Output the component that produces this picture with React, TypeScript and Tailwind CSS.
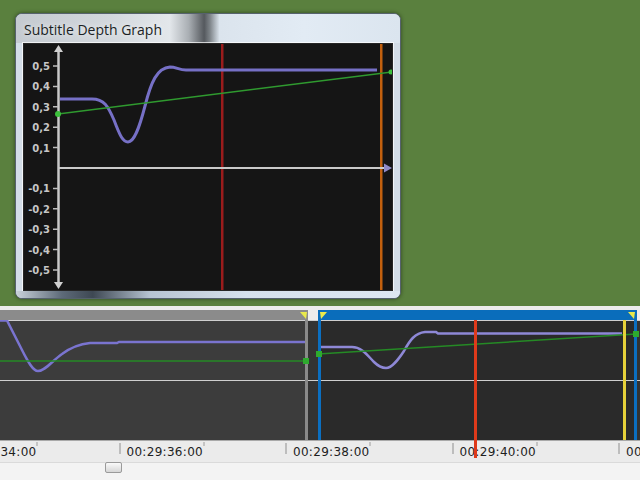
import React from "react";

// y positions of the depth labels in the graph (svg coords)
const depthLabels = [
  { t: "0,5", y: 22 },
  { t: "0,4", y: 42.4 },
  { t: "0,3", y: 62.8 },
  { t: "0,2", y: 83.2 },
  { t: "0,1", y: 103.6 },
  { t: "-0,1", y: 144.4 },
  { t: "-0,2", y: 164.8 },
  { t: "-0,3", y: 185.2 },
  { t: "-0,4", y: 205.6 },
  { t: "-0,5", y: 226 },
];

const rulerLabels = ["00:29:34:00", "00:29:36:00", "00:29:38:00", "00:29:40:00", "00:29:42:00"];

function DepthGraph() {
  return (
    <svg width="368" height="246" viewBox="0 0 368 246" className="block">
      {/* markers */}
      <rect x="197" y="0" width="2.5" height="246" fill="#9a1c1c" />
      <rect x="356" y="0" width="2.5" height="246" fill="#c2600e" />

      {/* y axis */}
      <line x1="34.5" y1="6" x2="34.5" y2="240" stroke="#c9c9c9" strokeWidth="2.5" />
      <polygon points="34.5,1 30,8 39,8" fill="#d0d0d0" />
      <polygon points="34.5,245 30,238 39,238" fill="#d0d0d0" />
      {depthLabels.map((l) => (
        <g key={l.t}>
          <line x1="29" y1={l.y} x2="34" y2={l.y} stroke="#bdbdbd" strokeWidth="1.5" />
          <text
            x="26"
            y={l.y + 4}
            textAnchor="end"
            fontFamily="'DejaVu Sans', sans-serif"
            fontWeight="bold"
            fontSize="10"
            fill="#c6c6c6"
          >
            {l.t}
          </text>
        </g>
      ))}

      {/* x axis */}
      <line x1="34" y1="124" x2="362" y2="124" stroke="#c9c9c9" strokeWidth="2" />
      <polygon points="368,124 360,119.5 360,128.5" fill="#8f8ac8" />

      {/* depth curve */}
      <path
        d="M36 55 L68 55 C80 55 84 62 90 76 C96 92 99 98 104 98 C110 98 115 85 121 62 C127 38 133 24 146 23 C152 23 155 26 162 26 L353 26"
        fill="none"
        stroke="#7670c6"
        strokeWidth="3"
      />

      {/* interpolation line */}
      <line x1="34" y1="70" x2="368" y2="28" stroke="#2f9a2f" strokeWidth="1.5" />
      <circle cx="34" cy="70" r="3" fill="#3cc03c" />
      <circle cx="367" cy="28" r="2.5" fill="#3cc03c" />
    </svg>
  );
}

function DepthWindow() {
  return (
    <div className="w-[386px] h-[286px] rounded-[7px] border border-[#56626e] bg-[#d3dde7] flex flex-col overflow-hidden shadow-[0_0_4px_rgba(0,0,0,0.45)]">
      <div className="h-[29px] shrink-0 pl-[8px] pt-[3px] bg-[linear-gradient(90deg,#c4cad0_0%,#d3d8dd_25%,#e3e7eb_40%,#a9aeb3_45%,#55595e_49%,#7e8489_50.5%,#dbe4ed_53%,#e2ebf4_75%,#dbe5ef_100%)]">
        <span className="font-['Open_Sans',sans-serif] text-[14px] leading-[18px] text-[#1b1f24] [text-shadow:0_0_6px_rgba(255,255,255,0.9)]">
          Subtitle Depth Graph
        </span>
      </div>
      <div className="mx-[7px] h-[248px] shrink-0 border border-[#262626] bg-[#151515] shadow-[0_0_0_1px_rgba(255,255,255,0.7)]">
        <DepthGraph />
      </div>
      <div className="flex-1 bg-[linear-gradient(90deg,#c9d2da_0%,#5d6a78_12%,#3e4853_20%,#b7c4d2_35%,#d6e1ec_60%,#dde7f1_100%)]" />
    </div>
  );
}

function Tri({ dir }: { dir: "left" | "right" }) {
  return (
    <svg width="7" height="7" viewBox="0 0 7 7" className="block">
      {dir === "right" ? (
        <polygon points="0,0 7,0 6,7" fill="#e9e94c" />
      ) : (
        <polygon points="0,0 7,0 1,7" fill="#e9e94c" />
      )}
    </svg>
  );
}

function TrackOverlay() {
  return (
    <svg width="640" height="142" viewBox="0 0 640 142" className="absolute top-0 left-0 block">
      <line x1="0" y1="0.5" x2="640" y2="0.5" stroke="#cfcfcf" />
      <line x1="0" y1="60.5" x2="640" y2="60.5" stroke="#cfcfcf" />

      {/* left clip */}
      <path
        d="M0 0.5 L7 0.5 L22 30 C28 42 33 51 38 51 C45 51 52 41 62 34 C70 28 80 24 90 23 L117 23 L119 22 L305 22"
        fill="none"
        stroke="#7a74d0"
        strokeWidth="2.5"
      />
      <line x1="0" y1="41" x2="305" y2="41" stroke="#258a25" strokeWidth="1.5" />
      <rect x="305" y="0" width="3" height="120" fill="#8a8a8a" />
      <rect x="303" y="38" width="6" height="6" fill="#2eaa2e" />

      {/* right clip */}
      <path
        d="M321 27 L352 27 C362 27 368 36 374 42 C379 47 382 48 386 48 C392 48 398 40 404 31 C410 20 415 13 425 12 L436 12 L438 13.5 L622 13.5"
        fill="none"
        stroke="#8e88d6"
        strokeWidth="2.5"
      />
      <line x1="318" y1="34" x2="636" y2="14" stroke="#258a25" strokeWidth="1.5" />
      <rect x="318" y="0" width="3" height="120" fill="#0b6fc1" />
      <rect x="623" y="0" width="3" height="120" fill="#e6d13a" />
      <rect x="634" y="0" width="3" height="120" fill="#0b6fc1" />
      <rect x="316" y="31" width="6" height="6" fill="#2eaa2e" />
      <rect x="633" y="11" width="6" height="6" fill="#2eaa2e" />

      {/* play head */}
      <rect x="474" y="0" width="3" height="138" fill="#de3a1b" />
    </svg>
  );
}

function Timeline() {
  return (
    <div className="h-[174px] shrink-0 flex flex-col bg-[#ececec] overflow-hidden">
      <div className="h-[4px] shrink-0" />
      <div className="h-[10px] shrink-0 flex">
        <div className="w-[308px] bg-[#8b8b8b] flex justify-end items-start pr-[1px] pt-[2px]">
          <Tri dir="right" />
        </div>
        <div className="w-[10px]" />
        <div className="w-[319px] bg-[#0a6dbb] flex justify-between items-start px-[2px] pt-[2px]">
          <Tri dir="left" />
          <Tri dir="right" />
        </div>
      </div>
      <div className="relative">
        <div className="h-[120px] flex">
          <div className="w-[306px] bg-[#3c3c3c]" />
          <div className="w-[12px] bg-[#333333]" />
          <div className="w-[316px] bg-[#2a2a2a]" />
          <div className="flex-1 bg-[#333333]" />
        </div>
        <div className="h-[22px] bg-[#ebebeb] border-t border-[#a9a9a9] overflow-hidden">
          <div className="flex -ml-[48px]">
            {rulerLabels.map((t) => (
              <div key={t} className="flex w-[166.5px] shrink-0 items-start">
                <div className="w-[2px] h-[11px] mt-[2px] bg-[#bdbdbd]" />
                <div className="w-[82px] pl-[6px] pt-[4px] whitespace-nowrap font-['DejaVu_Sans',sans-serif] text-[12px] leading-[14px] tracking-[0.3px] text-[#1e1e1e]">
                  {t}
                </div>
                <div className="w-[2px] h-[4px] mt-[1px] bg-[#c4c4c4]" />
              </div>
            ))}
          </div>
        </div>
        <TrackOverlay />
      </div>
      <div className="h-[18px] shrink-0 bg-[#f3f3f3] border-t border-[#dadada]">
        <div className="ml-[105px] -mt-[1px] w-[17px] h-[11px] rounded-[2px] border border-[#9a9a9a] bg-gradient-to-b from-[#fafafa] to-[#d6d6d6]" />
      </div>
    </div>
  );
}

export default function App() {
  return (
    <div className="w-[640px] h-[480px] bg-[#5a803e] flex flex-col overflow-hidden">
      <div className="h-[306px] shrink-0 pl-[15px] pt-[13px]">
        <DepthWindow />
      </div>
      <Timeline />
    </div>
  );
}
